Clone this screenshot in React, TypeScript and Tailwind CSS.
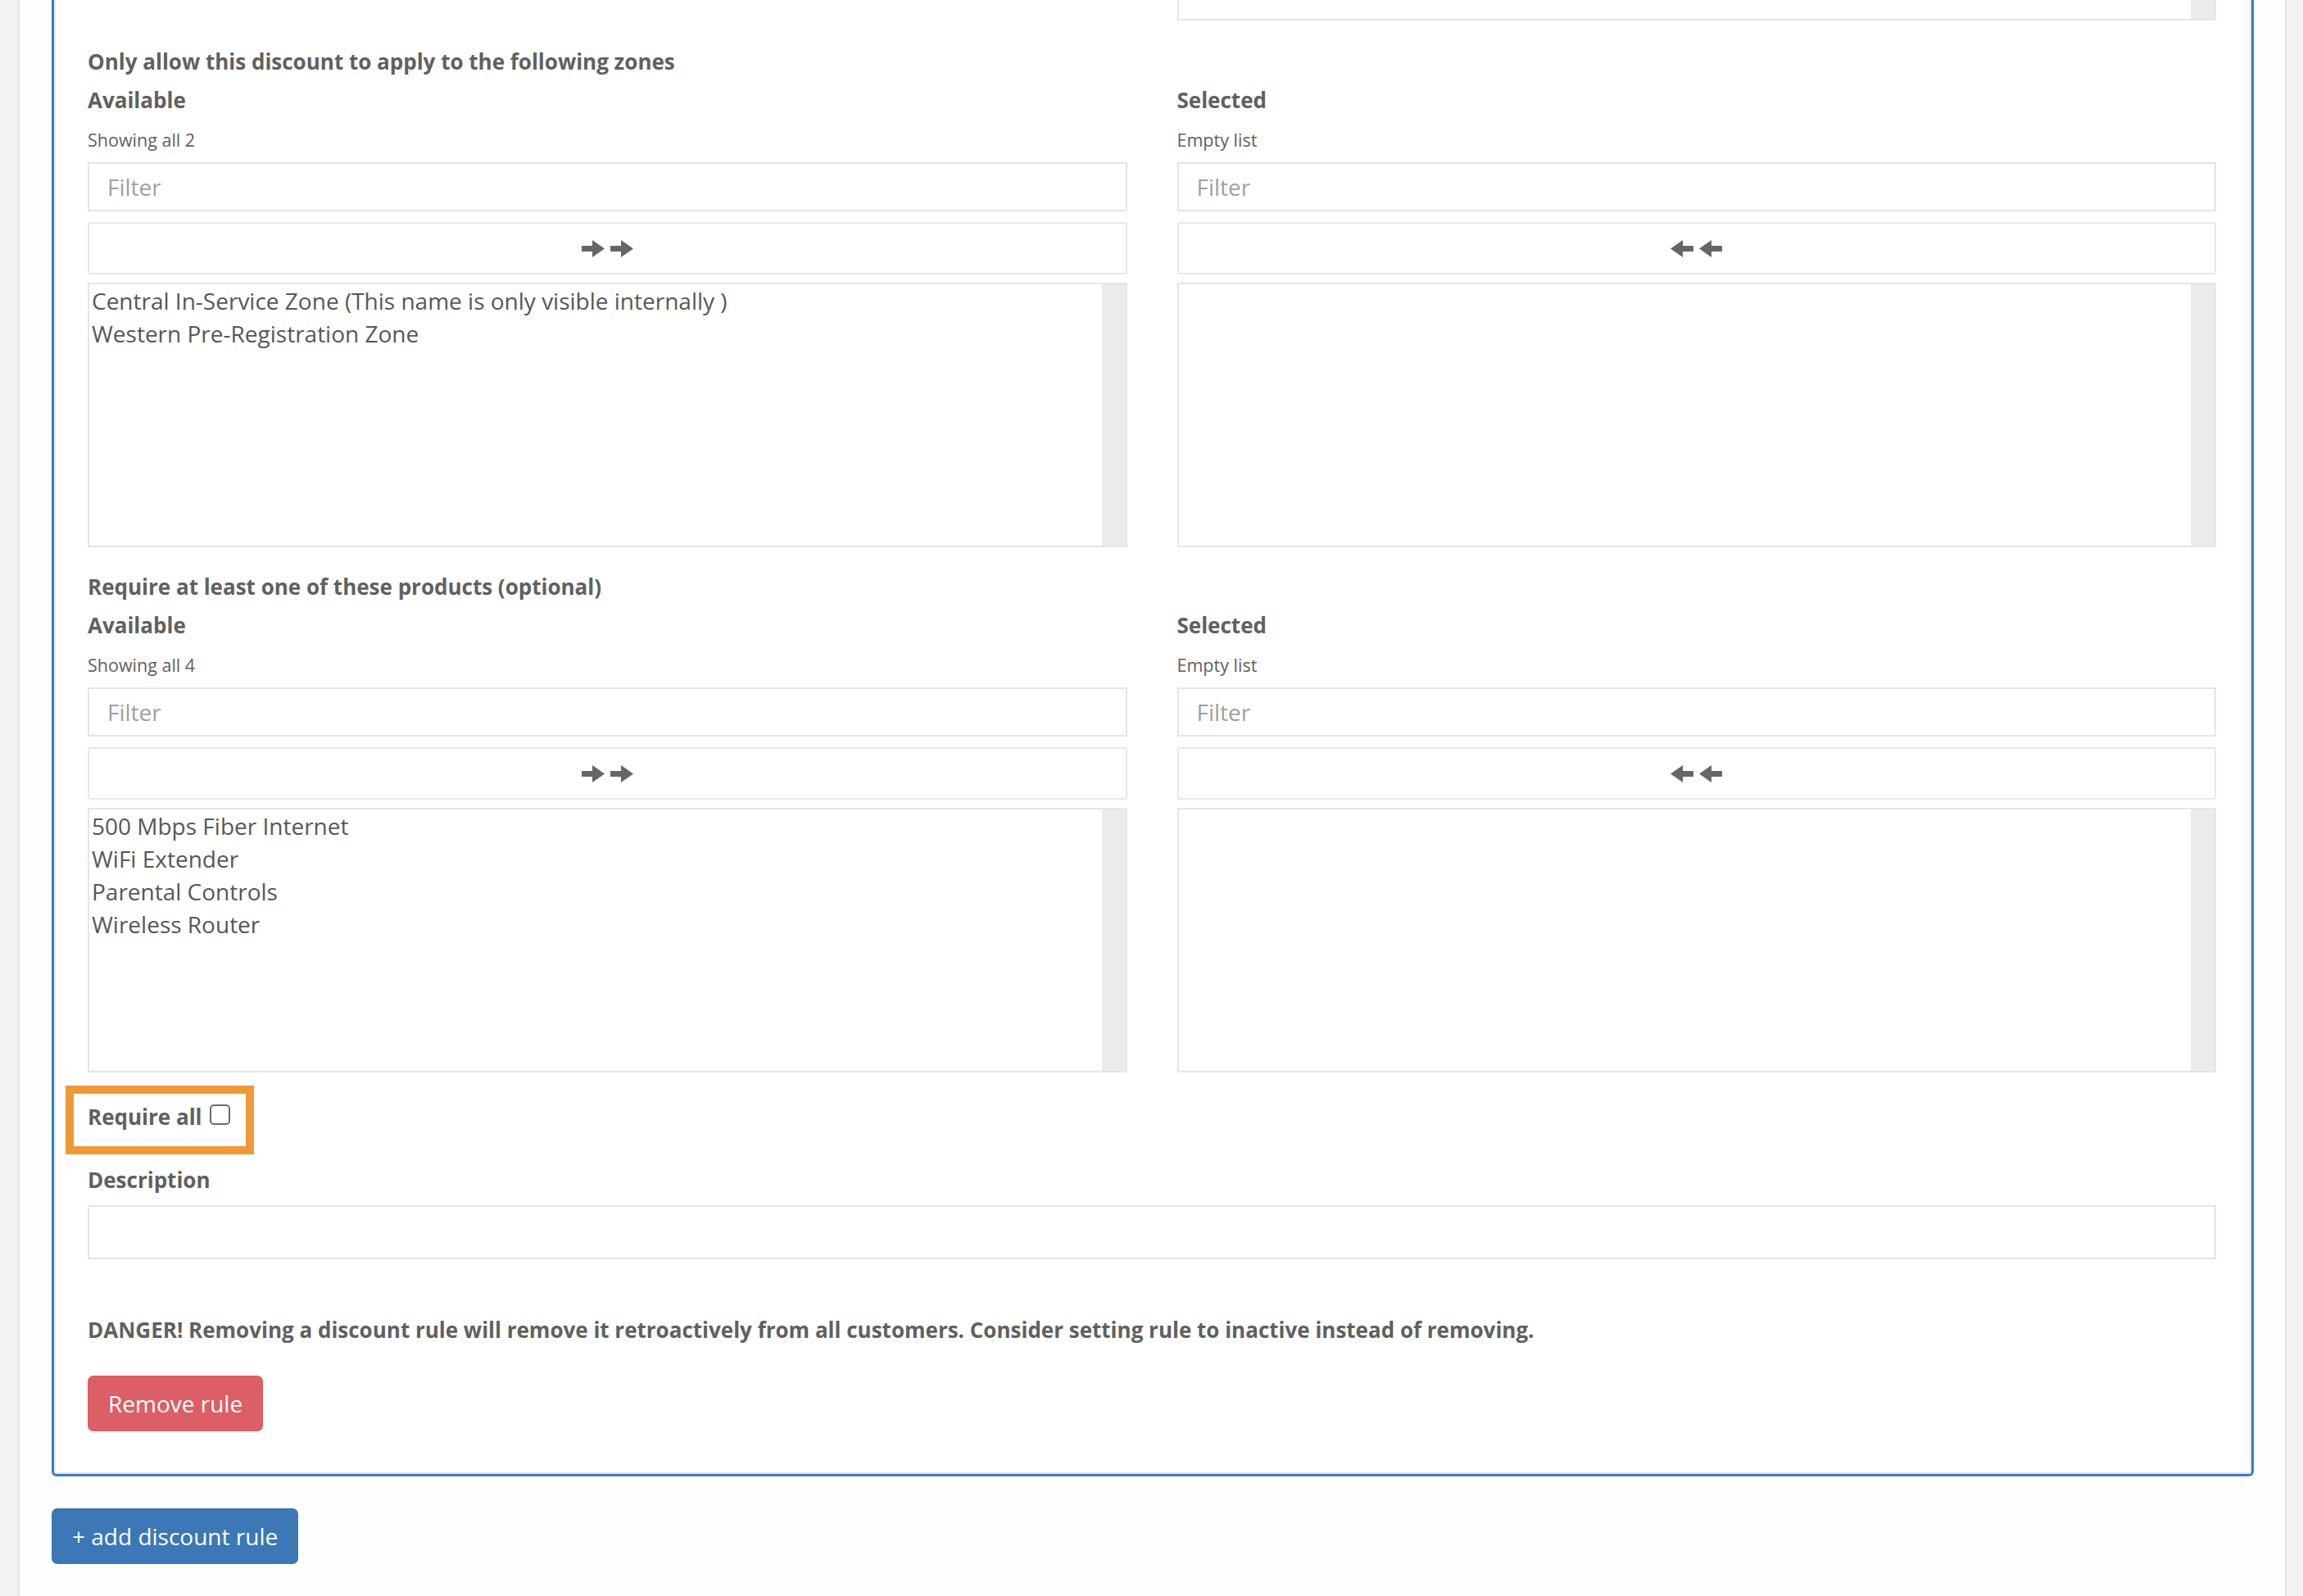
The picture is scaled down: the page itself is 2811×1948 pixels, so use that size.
import React from "react";

const FONT = { fontFamily: '"Open Sans", "Noto Sans", sans-serif' };

function ArrowRight() {
  return (
    <svg width="28" height="21" viewBox="0 0 28 21">
      <path d="M0 7 H13 V0 L28 10.5 L13 21 V14 H0 Z" fill="#666666" />
    </svg>
  );
}

function ArrowLeft() {
  return (
    <svg width="28" height="21" viewBox="0 0 28 21">
      <path d="M28 7 H15 V0 L0 10.5 L15 21 V14 H28 Z" fill="#666666" />
    </svg>
  );
}

function ListBox({ items }: { items: string[] }) {
  return (
    <div className="mt-[10px] h-[323px] border-2 border-[#e5e5e5] bg-white flex">
      <div className="flex-1 pl-[3px] pt-[0px]">
        {items.map((it) => (
          <div key={it} className="text-[28px] leading-[40px] text-[#575757] whitespace-nowrap">
            {it}
          </div>
        ))}
      </div>
      <div className="w-[29px] bg-[#ebebeb]" />
    </div>
  );
}

function Column({
  title,
  sub,
  dir,
  items,
}: {
  title: string;
  sub: string;
  dir: "right" | "left";
  items: string[];
}) {
  return (
    <div>
      <div className="mt-[11px] text-[26px] leading-[36px] font-bold text-[#606060]">{title}</div>
      <div className="mt-[15px] text-[21.5px] leading-[31px] text-[#606060]">{sub}</div>
      <div className="mt-[12px] h-[60px] border-2 border-[#e5e5e5] bg-white flex items-center px-[22px]">
        <span className="text-[28px] text-[#a0a0a0]">Filter</span>
      </div>
      <div className="mt-[13px] h-[64px] border-2 border-[#e8e8e8] rounded-[3px] bg-white flex items-center justify-center gap-[7px]">
        {dir === "right" ? (
          <>
            <ArrowRight />
            <ArrowRight />
          </>
        ) : (
          <>
            <ArrowLeft />
            <ArrowLeft />
          </>
        )}
      </div>
      <ListBox items={items} />
    </div>
  );
}

function DualList({ heading, items, mt }: { heading: string; items: string[]; mt: string }) {
  return (
    <div className={mt}>
      <div className="text-[26px] leading-[36px] font-bold text-[#606060]">{heading}</div>
      <div className="grid grid-cols-2 gap-x-[61px]">
        <Column title="Available" sub={`Showing all ${items.length}`} dir="right" items={items} />
        <Column title="Selected" sub="Empty list" dir="left" items={[]} />
      </div>
    </div>
  );
}

export default function App() {
  return (
    <div className="w-[2811px] h-[1948px] flex bg-[#f2f2f2] overflow-hidden" style={FONT}>
      <div className="w-[22px] shrink-0 bg-[#f2f2f2]" />
      <div className="flex-1 bg-[#fefefe] border-x-2 border-[#e6e6e6] pl-[39px] pr-[38px]">
        <div className="border-[3px] border-t-0 border-[#3b7bbf] rounded-b-[6px] bg-white shadow-[inset_0_-2px_0_0_#e6e6e6,inset_2px_0_0_0_#ececec,inset_-2px_0_0_0_#e6e6e6] pl-[41px] pr-[43px] pb-[52px]">
          <div className="grid grid-cols-2 gap-x-[61px]">
            <div />
            <div className="h-[25px] border-2 border-t-0 border-[#e5e5e5] bg-white flex">
              <div className="flex-1" />
              <div className="w-[29px] bg-[#ebebeb]" />
            </div>
          </div>

          <DualList
            mt="mt-[32px]"
            heading="Only allow this discount to apply to the following zones"
            items={["Central In-Service Zone (This name is only visible internally )", "Western Pre-Registration Zone"]}
          />

          <DualList
            mt="mt-[30px]"
            heading="Require at least one of these products (optional)"
            items={["500 Mbps Fiber Internet", "WiFi Extender", "Parental Controls", "Wireless Router"]}
          />

          <div className="mt-[16px] -ml-[27px] inline-flex items-start border-[10px] border-[#f0993a] pl-[17px] pr-[19px] pt-[10px] pb-[18px]">
            <span className="text-[26px] leading-[36px] font-bold text-[#606060]">Require all</span>
            <span className="ml-[9px] mt-[3px] w-[25px] h-[25px] border-2 border-[#6b6b6b] rounded-[5px] bg-white" />
          </div>

          <div className="mt-[13px] text-[26px] leading-[36px] font-bold text-[#606060]">Description</div>
          <div className="mt-[13px] h-[66px] border-2 border-[#e5e5e5] bg-white" />

          <div className="mt-[68px] text-[26px] leading-[36px] font-bold text-[#606060] whitespace-nowrap">
            DANGER! Removing a discount rule will remove it retroactively from all customers. Consider setting rule to inactive instead of removing.
          </div>

          <div className="mt-[38px]">
            <button className="h-[68px] px-[25px] rounded-[7px] bg-[#dc5e66] text-white text-[28px] leading-[40px]">
              Remove rule
            </button>
          </div>
        </div>

        <div className="mt-[39px]">
          <button className="h-[68px] px-[25px] rounded-[7px] bg-[#3b78b5] text-white text-[28px] leading-[40px]">
            + add discount rule
          </button>
        </div>
      </div>
      <div className="w-[20px] shrink-0 bg-[#f2f2f2]" />
    </div>
  );
}
